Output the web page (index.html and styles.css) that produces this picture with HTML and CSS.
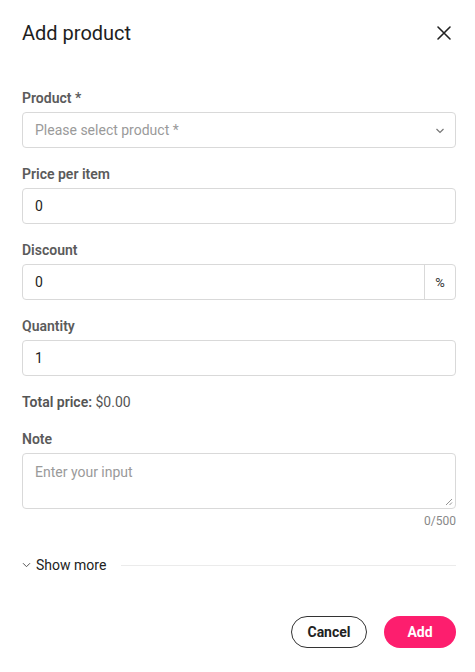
FILE: index.html
```html
<!DOCTYPE html>
<html>
<head>
<meta charset="utf-8">
<link rel="stylesheet" href="styles.css">
</head>
<body>
<div class="dialog">
  <header class="header">
    <h1 class="title">Add product</h1>
    <button class="close" aria-label="Close">
      <svg width="16" height="16" viewBox="0 0 16 16"><path d="M2 2L14 14M14 2L2 14" stroke="#222" stroke-width="1.6" fill="none" stroke-linecap="round"/></svg>
    </button>
  </header>
  <div class="form">
    <div class="field">
      <label class="label">Product *</label>
      <div class="control select">
        <span class="placeholder">Please select product *</span>
        <svg class="chev" width="10" height="6" viewBox="0 0 10 6"><path d="M1.5 1L5 4.5L8.5 1" stroke="#777" stroke-width="1.2" fill="none"/></svg>
      </div>
    </div>
    <div class="field">
      <label class="label">Price per item</label>
      <div class="control"><span class="value">0</span></div>
    </div>
    <div class="field">
      <label class="label">Discount</label>
      <div class="control group">
        <span class="value grow">0</span>
        <span class="addon">%</span>
      </div>
    </div>
    <div class="field">
      <label class="label">Quantity</label>
      <div class="control"><span class="value">1</span></div>
    </div>
    <div class="total"><span class="total-label">Total price:</span> $0.00</div>
    <div class="field note">
      <label class="label">Note</label>
      <div class="control textarea">
        <span class="placeholder">Enter your input</span>
        <svg class="grip" width="8" height="8" viewBox="0 0 8 8"><path d="M7 1L1 7M7 4.5L4.5 7" stroke="#888" stroke-width="0.9"/></svg>
      </div>
      <div class="counter">0/500</div>
    </div>
    <div class="more">
      <svg class="more-chev" width="9" height="6" viewBox="0 0 9 6"><path d="M1 1.2L4.5 4.7L8 1.2" stroke="#555" stroke-width="1" fill="none"/></svg>
      <span class="more-text">Show more</span>
      <span class="rule"></span>
    </div>
  </div>
  <footer class="footer">
    <button class="btn btn-outline">Cancel</button>
    <button class="btn btn-primary">Add</button>
  </footer>
</div>
</body>
</html>
```
FILE: styles.css
```css
* { box-sizing: border-box; }
html, body { margin: 0; padding: 0; background: #fff; }
body {
  font-family: Roboto, "Liberation Sans", Arial, sans-serif;
  color: #222;
  width: 475px;
  height: 672px;
  overflow: hidden;
}
.dialog {
  padding: 0 19px 0 22px;
  display: flex;
  flex-direction: column;
}
.header {
  display: flex;
  align-items: center;
  justify-content: space-between;
  height: 68px;
  padding-bottom: 2px;
}
.title {
  margin: 0;
  font-size: 20px;
  font-weight: 400;
  color: #1e1e1e;
  letter-spacing: 0;
}
.close {
  border: 0;
  background: none;
  padding: 0;
  width: 16px;
  height: 16px;
  margin-right: 4px;
  display: flex;
}
.form {
  display: flex;
  flex-direction: column;
  padding-top: 22px;
}
.field {
  display: flex;
  flex-direction: column;
  margin-bottom: 18px;
}
.label {
  font-size: 14px;
  line-height: 16px;
  font-weight: 600;
  color: #5b5b5b;
  margin-bottom: 6px;
}
.control {
  height: 36px;
  border: 1px solid #d9d9d9;
  border-radius: 4px;
  display: flex;
  align-items: center;
  padding: 0 12px;
  font-size: 14px;
}
.value { color: #222; }
.placeholder { color: #9a9a9a; flex: 1; }
.select { justify-content: space-between; padding-right: 10px; }
.chev { margin-top: 1px; }
.group { padding-right: 0; }
.grow { flex: 1; }
.addon {
  width: 31px;
  height: 100%;
  border-left: 1px solid #d9d9d9;
  display: flex;
  align-items: center;
  justify-content: center;
  color: #333;
  font-size: 13px;
}
.total {
  font-size: 14px;
  line-height: 16px;
  color: #555;
  margin-top: 0;
  margin-bottom: 21px;
}
.total-label { font-weight: 600; }
.note { margin-bottom: 0; }
.textarea {
  height: 56px;
  align-items: flex-start;
  padding-top: 10px;
  position: relative;
}
.grip { position: absolute; right: 2px; bottom: 2px; }
.counter {
  text-align: right;
  font-size: 12px;
  line-height: 16px;
  color: #888;
  margin-top: 4px;
}
.more {
  display: flex;
  align-items: center;
  margin-top: 28px;
  height: 16px;
}
.more-chev { margin-left: 0; margin-right: 5px; }
.more-text { font-size: 14px; color: #222; }
.rule {
  flex: 1;
  height: 1px;
  background: #ebebeb;
  margin-left: 15px;
}
.footer {
  display: flex;
  justify-content: flex-end;
  gap: 17px;
  margin-top: 43px;
}
.btn {
  height: 32px;
  border-radius: 16px;
  font-family: Roboto, "Liberation Sans", Arial, sans-serif;
  font-size: 14px;
  font-weight: 700;
  padding: 0;
  cursor: pointer;
}
.btn-outline {
  width: 76px;
  background: #fff;
  border: 1px solid #333;
  color: #222;
}
.btn-primary {
  width: 72px;
  background: #fd1e6e;
  border: 0;
  color: #fff;
}
```
